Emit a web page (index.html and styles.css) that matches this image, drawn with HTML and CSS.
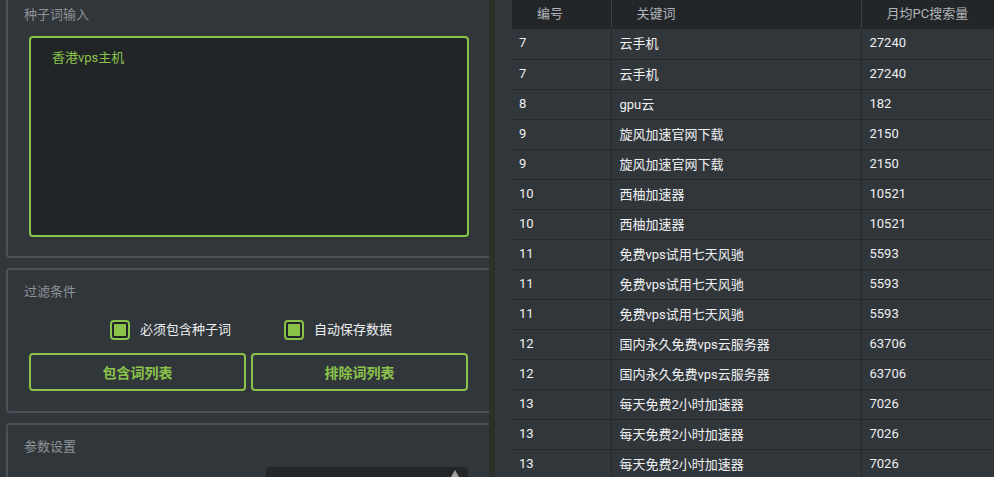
FILE: index.html
```html
<!DOCTYPE html>
<html lang="zh">
<head>
<meta charset="utf-8">
<link rel="stylesheet" href="styles.css">
</head>
<body>
<div class="app">
  <div class="left">
    <div class="group g1">
      <div class="gtitle">种子词输入</div>
      <div class="textarea">香港vps主机</div>
    </div>
    <div class="group g2">
      <div class="gtitle">过滤条件</div>
      <div class="checks">
        <label class="chk"><span class="box"><span class="tick"></span></span>必须包含种子词</label>
        <label class="chk chk2"><span class="box"><span class="tick"></span></span>自动保存数据</label>
      </div>
      <div class="btns">
        <div class="btn">包含词列表</div>
        <div class="btn">排除词列表</div>
      </div>
    </div>
    <div class="group g3">
      <div class="gtitle">参数设置</div>
      <div class="spinrow">
        <div class="spin"><span class="arrow"></span></div>
      </div>
    </div>
  </div>
  <div class="splitter"></div>
  <div class="gutter"></div>
  <div class="right">
    <table class="grid">
      <colgroup><col class="c1"><col class="c2"><col class="c3"></colgroup>
      <thead>
        <tr><th>编号</th><th>关键词</th><th>月均PC搜索量</th></tr>
      </thead>
      <tbody>
        <tr><td>7</td><td>云手机</td><td>27240</td></tr>
        <tr><td>7</td><td>云手机</td><td>27240</td></tr>
        <tr><td>8</td><td>gpu云</td><td>182</td></tr>
        <tr><td>9</td><td>旋风加速官网下载</td><td>2150</td></tr>
        <tr><td>9</td><td>旋风加速官网下载</td><td>2150</td></tr>
        <tr><td>10</td><td>西柚加速器</td><td>10521</td></tr>
        <tr><td>10</td><td>西柚加速器</td><td>10521</td></tr>
        <tr><td>11</td><td>免费vps试用七天风驰</td><td>5593</td></tr>
        <tr><td>11</td><td>免费vps试用七天风驰</td><td>5593</td></tr>
        <tr><td>11</td><td>免费vps试用七天风驰</td><td>5593</td></tr>
        <tr><td>12</td><td>国内永久免费vps云服务器</td><td>63706</td></tr>
        <tr><td>12</td><td>国内永久免费vps云服务器</td><td>63706</td></tr>
        <tr><td>13</td><td>每天免费2小时加速器</td><td>7026</td></tr>
        <tr><td>13</td><td>每天免费2小时加速器</td><td>7026</td></tr>
        <tr><td>13</td><td>每天免费2小时加速器</td><td>7026</td></tr>
      </tbody>
    </table>
  </div>
</div>
</body>
</html>
```

FILE: styles.css
```css
html, body {
  margin: 0;
  padding: 0;
  background: #31363b;
  font-family: "Roboto", "Noto Sans CJK SC", sans-serif;
  font-size: 13px;
  color: #eff0f1;
}
.app {
  display: flex;
  width: 994px;
  height: 477px;
  overflow: hidden;
}
.left {
  width: 489px;
  flex: none;
  background: #31363b;
  overflow: hidden;
  display: flex;
  flex-direction: column;
  padding-left: 6px;
  box-sizing: border-box;
}
.group {
  width: 500px;
  flex: none;
  border: 2px solid #4a5158;
  border-radius: 4px;
  box-sizing: border-box;
  padding-left: 21px;
  display: flex;
  flex-direction: column;
}
.gtitle {
  height: 20px;
  line-height: 20px;
  color: #8e9397;
  font-size: 13px;
  margin-left: -5px;
}
.g1 {
  margin-top: -10px;
  padding-top: 13px;
  padding-bottom: 19px;
}
.textarea {
  margin-top: 11px;
  width: 440px;
  height: 201px;
  box-sizing: border-box;
  border: 2px solid #8bc34a;
  border-radius: 4px;
  background: #222528;
  color: #8bc34a;
  padding: 10px 0 0 21px;
  line-height: 20px;
}
.g2 {
  margin-top: 10px;
  padding-top: 12px;
  padding-bottom: 20px;
}
.checks {
  margin-top: 18px;
  height: 20px;
  display: flex;
  align-items: center;
  padding-left: 81px;
}
.chk {
  display: flex;
  align-items: center;
  gap: 10px;
  color: #eff0f1;
  line-height: 20px;
}
.chk2 {
  margin-left: 53px;
}
.box {
  width: 20px;
  height: 20px;
  box-sizing: border-box;
  border: 2px solid #8bc34a;
  border-radius: 4px;
  background: #232629;
  display: flex;
  align-items: center;
  justify-content: center;
}
.tick {
  width: 12px;
  height: 12px;
  background: #8bc34a;
}
.btns {
  margin-top: 13px;
  display: flex;
  gap: 5px;
}
.btn {
  width: 217px;
  height: 38px;
  box-sizing: border-box;
  border: 2px solid #8bc34a;
  border-radius: 4px;
  color: #8bc34a;
  font-weight: bold;
  font-size: 14px;
  display: flex;
  align-items: center;
  justify-content: center;
}
.g3 {
  margin-top: 10px;
  padding-top: 12px;
  height: 80px;
}
.spinrow {
  margin-top: 10px;
  padding-left: 237px;
}
.spin {
  width: 202px;
  height: 30px;
  background: #232629;
  border-radius: 4px;
  position: relative;
}
.arrow {
  position: absolute;
  right: 9px;
  top: 3px;
  width: 0;
  height: 0;
  border-left: 4px solid transparent;
  border-right: 4px solid transparent;
  border-bottom: 7px solid #a0a2a4;
}
.splitter {
  width: 6px;
  flex: none;
  background: #2b3029;
}
.gutter {
  width: 17px;
  flex: none;
  background: #31363b;
}
.right {
  flex: 1;
  overflow: hidden;
}
.grid {
  border-collapse: collapse;
  table-layout: fixed;
  width: 520px;
}
.c1 { width: 99px; }
.c2 { width: 250px; }
.c3 { width: 171px; }
.grid th {
  height: 29px;
  padding: 0 0 5px 25px;
  background: #232629;
  color: #b0b4b8;
  font-weight: normal;
  text-align: left;
  border-right: 1px solid #3a3f44;
  box-sizing: border-box;
}
.grid td {
  height: 30px;
  padding: 0 0 2px 8px;
  box-sizing: border-box;
  border-right: 1px solid #25292c;
  border-bottom: 1px solid #25292c;
  background: #31363b;
  white-space: nowrap;
}
.grid td:first-child {
  padding-left: 7px;
}
```
